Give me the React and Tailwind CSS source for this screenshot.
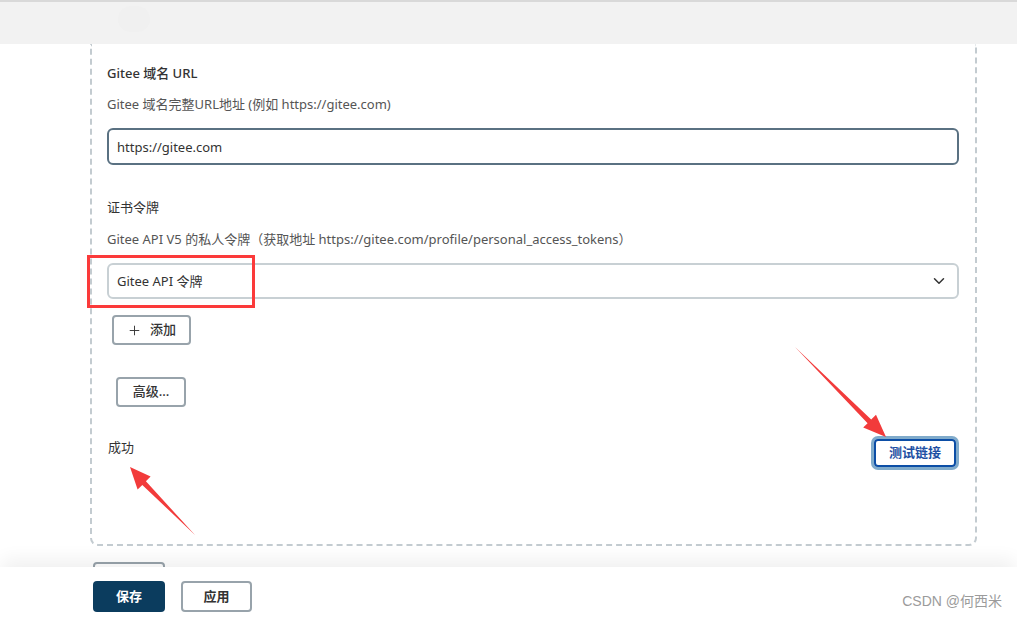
import React from "react";
import { ChevronDown, Plus } from "lucide-react";

export default function App() {
  return (
    <div className="relative w-[1017px] h-[617px] overflow-hidden bg-white font-['Noto_Sans','Noto_Sans_CJK_SC',sans-serif] text-[13px] text-[#333]">
      {/* scrolled content */}
      <div className="pt-[44px]">
        <div className="ml-[90px] w-[887px] h-[502px] border-2 border-t-0 border-dashed border-[#c3cbd0] rounded-b-[8px] pl-[15px] pr-[16px] flex flex-col">
          <div className="mt-[19px] leading-[20px] font-medium text-[#333]">Gitee 域名 URL</div>
          <div className="mt-[11px] leading-[20px] text-[#555]">Gitee 域名完整URL地址 (例如 https://gitee.com)</div>
          <div className="mt-[14px] h-[37px] border-2 border-[#5a7182] rounded-[6px] flex items-center pl-[8px] pt-[3px] text-[#333]">
            https://gitee.com
          </div>
          <div className="mt-[32px] leading-[20px] text-[#333]">证书令牌</div>
          <div className="mt-[12px] leading-[20px] text-[#555]">Gitee API V5 的私人令牌（获取地址 https://gitee.com/profile/personal_access_tokens）</div>
          <div className="mt-[14px] h-[36px] border-2 border-[#c8d0d4] rounded-[6px] flex items-center justify-between pl-[8px] pr-[9px] text-[#333]">
            <span className="pt-[2px]">Gitee API 令牌</span>
            <ChevronDown size={18} strokeWidth={2} className="text-[#333]" />
          </div>
          <div className="mt-[16px] ml-[5px] w-[79px] h-[30px] border-2 border-[#98a3ab] rounded-[4px] flex items-center justify-center gap-[8px] text-[#333] font-medium">
            <Plus size={15} strokeWidth={1.5} />
            <span>添加</span>
          </div>
          <div className="mt-[32px] ml-[9px] w-[70px] h-[30px] border-2 border-[#98a3ab] rounded-[4px] flex items-center justify-center text-[#333] font-medium">
            高级...
          </div>
          <div className="mt-[32px] flex items-start justify-between">
            <span className="ml-[1px] mt-[-2px] leading-[20px] text-[#333]">成功</span>
            <div className="mr-[3px] w-[82px] h-[28px] border-2 border-[#0c4ea6] rounded-[4px] shadow-[0_0_0_3px_#80abcb] flex items-center justify-center text-[#1d4fa3] font-semibold">
              测试链接
            </div>
          </div>
        </div>
        <div className="mt-[16px] ml-[93px] w-[72px] h-[31px] border-2 border-[#98a3ab] rounded-[4px]" />
      </div>

      {/* sticky header */}
      <div className="absolute top-0 left-0 right-0 h-[44px] bg-[#f2f2f2] border-t-2 border-[#d9d9d9]">
        <div className="absolute left-[118px] top-[4px] w-[32px] h-[26px] rounded-full bg-[#f0f0f0]" />
      </div>

      {/* sticky footer */}
      <div className="absolute left-0 right-0 bottom-0 h-[50px] bg-white shadow-[0_-10px_18px_-2px_rgba(0,0,0,0.06)] flex items-start pt-[14px] pl-[93px] gap-[16px]">
        <div className="w-[72px] h-[31px] rounded-[4px] bg-[#0b3c5e] text-white font-bold flex items-center justify-center">
          保存
        </div>
        <div className="w-[71px] h-[31px] rounded-[4px] border-2 border-[#98a3ab] text-[#333] font-bold flex items-center justify-center">
          应用
        </div>
        <div className="absolute right-[15px] top-[24px] text-[14px] text-[#9b9b9b] font-['Liberation_Sans','Noto_Sans_CJK_SC',sans-serif]">
          CSDN @何西米
        </div>
      </div>

      {/* annotations */}
      <div className="absolute left-[87px] top-[255px] w-[168px] h-[53px] border-[3px] border-[#fb3a3a]" />
      <svg className="absolute left-0 top-0" width="1017" height="617">
        <polygon
          points="795,347 871.2,419.6 876,414.8 886,437 863.2,427.6 867.6,423.2"
          fill="#f23b3b"
        />
        <polygon
          points="195,535 142.3,484.9 137.6,489.6 130,467 150.6,476.6 145.9,481.3"
          fill="#f23b3b"
        />
      </svg>
    </div>
  );
}
